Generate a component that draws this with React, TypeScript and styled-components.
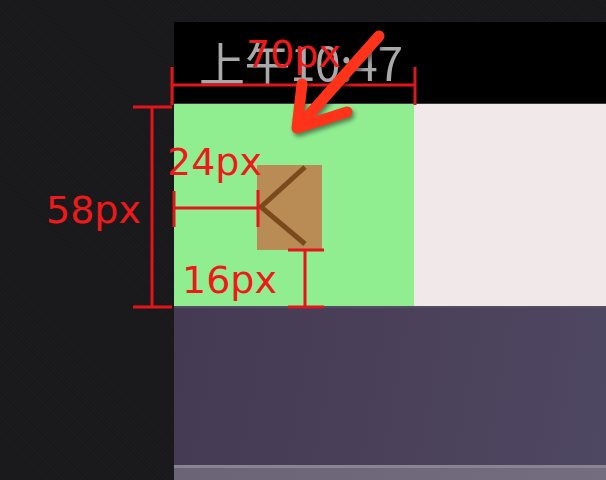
import React, { FC } from "react";
import styled, { createGlobalStyle } from "styled-components";

const GlobalStyle = createGlobalStyle`
  html, body {
    margin: 0;
    padding: 0;
    background: #19191b;
    overflow: hidden;
  }
`;

interface LabelProps {
  $x: number;
  $y: number;
}

const labels = [
  { text: "70px", x: 246, y: 35 },
  { text: "58px", x: 46, y: 191 },
  { text: "24px", x: 167, y: 143 },
  { text: "16px", x: 182, y: 261 },
];

const App: FC = () => {
  return (
    <>
      <GlobalStyle />
      <Page>
        <Gutter />
        <Phone>
          <StatusBar>上午10:47</StatusBar>
          <NavBar>
            <BackCell>
              <BackIcon>
                <svg width="65" height="85" viewBox="0 0 65 85">
                  <polyline
                    points="48,2 4,42 48,79"
                    fill="none"
                    stroke="#7b4a1c"
                    strokeWidth="5"
                  />
                </svg>
              </BackIcon>
            </BackCell>
            <TitleCell />
          </NavBar>
          <Content />
          <BottomStrip />
        </Phone>

        {/* measurement overlay */}
        <Overlay>
          <svg width="606" height="480" viewBox="0 0 606 480">
            <g stroke="#e3141c" strokeWidth="3" fill="none">
              {/* 70px width */}
              <line x1="172" y1="85" x2="415" y2="85" />
              <line x1="172" y1="67" x2="172" y2="105" />
              <line x1="415" y1="67" x2="415" y2="105" />
              {/* 58px height */}
              <line x1="152" y1="107" x2="152" y2="307" />
              <line x1="133" y1="107" x2="172" y2="107" />
              <line x1="133" y1="307" x2="172" y2="307" />
              {/* 24px */}
              <line x1="174" y1="208" x2="258" y2="208" />
              <line x1="174" y1="191" x2="174" y2="227" />
              <line x1="258" y1="190" x2="258" y2="227" />
              {/* 16px */}
              <line x1="305" y1="250" x2="305" y2="307" />
              <line x1="288" y1="250" x2="324" y2="250" />
              <line x1="288" y1="307" x2="324" y2="307" />
            </g>
            <g
              stroke="#ff3319"
              strokeWidth="11"
              strokeLinecap="round"
              strokeLinejoin="round"
              fill="none"
              style={{ filter: "drop-shadow(2px 3px 2px rgba(0,0,0,0.45))" }}
            >
              <line x1="379" y1="36" x2="301" y2="124" />
              <polyline points="302,84 297,128 347,112" />
            </g>
          </svg>
          {labels.map((l) => (
            <Label key={l.text} $x={l.x} $y={l.y}>
              {l.text}
            </Label>
          ))}
        </Overlay>
      </Page>
    </>
  );
};

const Page = styled.div`
  position: relative;
  display: flex;
  width: 606px;
  height: 480px;
  overflow: hidden;
  background-color: #19191b;
  background-image: repeating-linear-gradient(
    45deg,
    rgba(255, 255, 255, 0.012) 0 1px,
    transparent 1px 3px
  );
`;

const Gutter = styled.div`
  flex: 0 0 174px;
`;

const Phone = styled.div`
  flex: 1 0 0;
  display: flex;
  flex-direction: column;
  margin-top: 22px;
`;

const StatusBar = styled.div`
  height: 82px;
  box-sizing: border-box;
  padding: 16px 0 0 25px;
  background: #000;
  border-bottom: 1px solid #3a3a3a;
  color: #a9a9a9;
  font-family: "Noto Sans CJK SC", "DejaVu Sans", sans-serif;
  font-size: 46px;
  line-height: 1;
  letter-spacing: -0.5px;
  white-space: nowrap;
  filter: blur(0.4px);
`;

const NavBar = styled.div`
  display: flex;
  height: 202px;
`;

const BackCell = styled.div`
  flex: 0 0 240px;
  display: flex;
  align-items: flex-end;
  box-sizing: border-box;
  padding: 0 0 56px 83px;
  background: #90ee90;
`;

const BackIcon = styled.div`
  display: flex;
  width: 65px;
  height: 85px;
  background: #b98c55;
`;

const TitleCell = styled.div`
  flex: 1 0 0;
  background: #f1e8ea;
`;

const Content = styled.div`
  height: 157px;
  border-top: 2px solid #554d62;
  background: linear-gradient(100deg, #453a54 0%, #4a405a 50%, #4f4862 100%);
`;

const BottomStrip = styled.div`
  flex: 1 0 0;
  border-top: 3px solid #8a8394;
  background: linear-gradient(90deg, #6b6475, #746d80);
`;

const Overlay = styled.div`
  position: absolute;
  inset: 0;
  pointer-events: none;

  svg {
    position: absolute;
    left: 0;
    top: 0;
  }
`;

const Label = styled.span<LabelProps>`
  position: absolute;
  left: ${(p) => p.$x}px;
  top: ${(p) => p.$y}px;
  color: #ee1a1a;
  font-family: "DejaVu Sans", Verdana, sans-serif;
  font-size: 38px;
  line-height: 1;
  white-space: nowrap;
`;

export default App;
